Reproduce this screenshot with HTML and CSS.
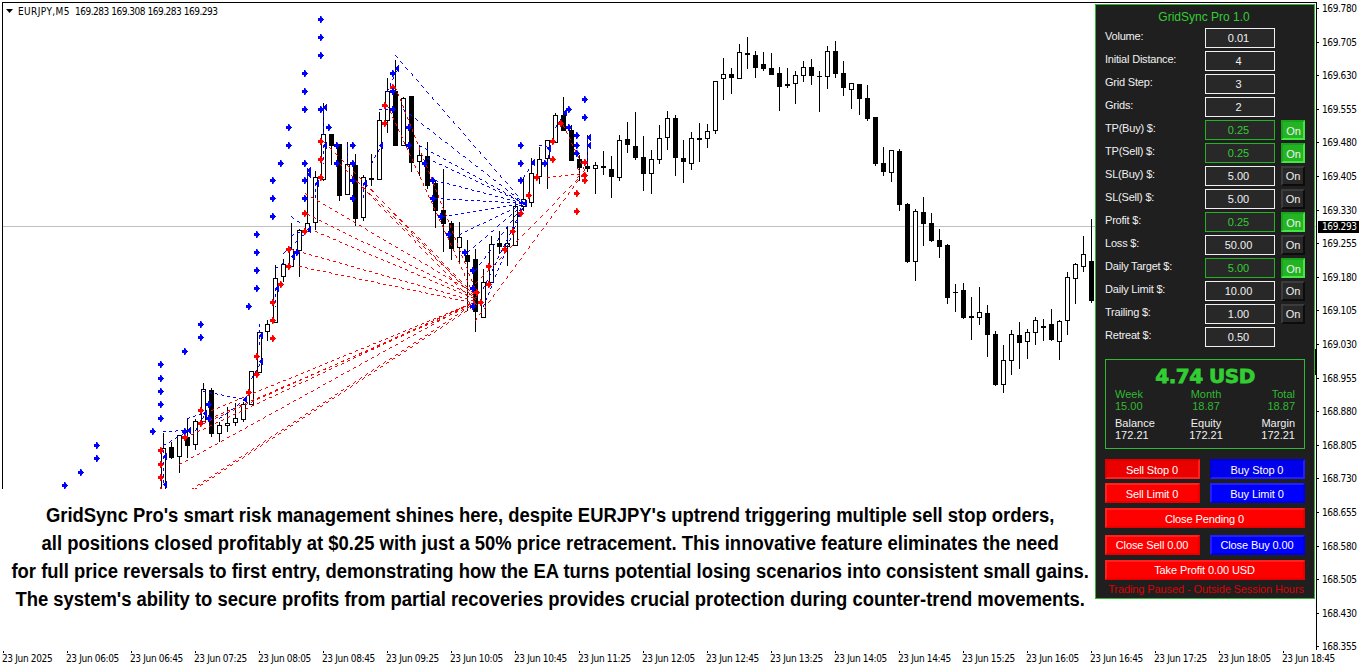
FILE: index.html
```html
<!DOCTYPE html>
<html lang="en">
<head>
    <meta charset="UTF-8">
    <meta name="viewport" content="width=device-width, initial-scale=1.0">
    <title>GridSync Pro - EURJPY,M5</title>
    <link rel="stylesheet" href="styles.css">
</head>
<body>

    <div class="terminal">
        <main class="chart">
            <div class="symbol">
                <svg class="caret" width="7" height="4" viewBox="0 0 7 4"><path d="M0 0h7L3.5 4z"/></svg>
                <span class="symbol-name">EURJPY,M5</span>
                <span class="symbol-prices">169.283 169.308 169.283 169.293</span>
            </div>

            <svg id="plot" class="plot" width="1316" height="489" viewBox="0 0 1316 489"></svg>

            <div class="caption">
                <p>GridSync Pro's smart risk management shines here, despite EURJPY's uptrend triggering multiple sell stop orders,</p>
                <p>all positions closed profitably at $0.25 with just a 50% price retracement. This innovative feature eliminates the need</p>
                <p>for full price reversals to first entry, demonstrating how the EA turns potential losing scenarios into consistent small gains.</p>
                <p>The system's ability to secure profits from partial recoveries provides crucial protection during counter-trend movements.</p>
            </div>
        </main>

        <aside class="price-axis">
            <span>169.780</span>
            <span>169.705</span>
            <span>169.630</span>
            <span>169.555</span>
            <span>169.480</span>
            <span>169.405</span>
            <span>169.330</span>
            <span>169.255</span>
            <span>169.180</span>
            <span>169.105</span>
            <span>169.030</span>
            <span>168.955</span>
            <span>168.880</span>
            <span>168.805</span>
            <span>168.730</span>
            <span>168.655</span>
            <span>168.580</span>
            <span>168.505</span>
            <span>168.430</span>
            <span>168.355</span>
            <div class="price-tag">169.293</div>
        </aside>

        <footer class="time-axis">
            <span>23 Jun 2025</span>
            <span>23 Jun 06:05</span>
            <span>23 Jun 06:45</span>
            <span>23 Jun 07:25</span>
            <span>23 Jun 08:05</span>
            <span>23 Jun 08:45</span>
            <span>23 Jun 09:25</span>
            <span>23 Jun 10:05</span>
            <span>23 Jun 10:45</span>
            <span>23 Jun 11:25</span>
            <span>23 Jun 12:05</span>
            <span>23 Jun 12:45</span>
            <span>23 Jun 13:25</span>
            <span>23 Jun 14:05</span>
            <span>23 Jun 14:45</span>
            <span>23 Jun 15:25</span>
            <span>23 Jun 16:05</span>
            <span>23 Jun 16:45</span>
            <span>23 Jun 17:25</span>
            <span>23 Jun 18:05</span>
            <span>23 Jun 18:45</span>
        </footer>

        <!-- Expert advisor panel -->
        <section class="panel">
            <h1>GridSync Pro 1.0</h1>

            <div class="settings">
                <div class="row"><label>Volume:</label><output>0.01</output></div>
                <div class="row"><label>Initial Distance:</label><output>4</output></div>
                <div class="row"><label>Grid Step:</label><output>3</output></div>
                <div class="row"><label>Grids:</label><output>2</output></div>
                <div class="row active"><label>TP(Buy) $:</label><output>0.25</output><button>On</button></div>
                <div class="row active"><label>TP(Sell) $:</label><output>0.25</output><button>On</button></div>
                <div class="row"><label>SL(Buy) $:</label><output>5.00</output><button>On</button></div>
                <div class="row"><label>SL(Sell) $:</label><output>5.00</output><button>On</button></div>
                <div class="row active"><label>Profit $:</label><output>0.25</output><button>On</button></div>
                <div class="row"><label>Loss $:</label><output>50.00</output><button>On</button></div>
                <div class="row active"><label>Daily Target $:</label><output>5.00</output><button>On</button></div>
                <div class="row"><label>Daily Limit $:</label><output>10.00</output><button>On</button></div>
                <div class="row"><label>Trailing $:</label><output>1.00</output><button>On</button></div>
                <div class="row"><label>Retreat $:</label><output>0.50</output></div>
            </div>

            <div class="stats">
                <h2>4.74 USD</h2>
                <div class="stats-row profit">
                    <div>Week<br>15.00</div>
                    <div>Month<br>18.87</div>
                    <div>Total<br>18.87</div>
                </div>
                <div class="stats-row">
                    <div>Balance<br>172.21</div>
                    <div>Equity<br>172.21</div>
                    <div>Margin<br>172.21</div>
                </div>
            </div>

            <div class="actions">
                <button class="sell pressed">Sell Stop 0</button>
                <button class="buy pressed">Buy Stop 0</button>
                <button class="sell">Sell Limit 0</button>
                <button class="buy">Buy Limit 0</button>
                <button class="sell wide">Close Pending 0</button>
                <button class="sell close">Close Sell 0.00</button>
                <button class="buy close">Close Buy 0.00</button>
                <button class="sell wide last">Take Profit 0.00 USD</button>
            </div>

            <p class="status">Trading Paused - Outside Session Hours</p>
        </section>
    </div>

    <script src="chart.js"></script>
</body>
</html>
```
FILE: styles.css
```css
* {
    box-sizing: border-box;
}

body {
    margin: 0;
    background-color: #fff;
    color: #000;
    font-family: "Liberation Sans", Arial, sans-serif;
    overflow: hidden;
}

.terminal {
    position: relative;
    display: grid;
    grid-template-columns: 1316px 46px;
    grid-template-rows: 650px 20px;
    width: 1362px;
    height: 670px;
}

/* Chart */
.chart {
    position: relative;
    display: flex;
    flex-direction: column;
}

.plot {
    display: block;
    flex: none;
}

.symbol {
    position: absolute;
    top: 4px;
    left: 6px;
    display: flex;
    align-items: center;
    height: 14px;
}

.symbol,
.price-axis,
.time-axis {
    font-family: "DejaVu Sans Condensed", "DejaVu Sans", sans-serif;
    font-stretch: condensed;
    font-size: 10px;
    letter-spacing: -0.35px;
    white-space: nowrap;
}

.symbol-name {
    width: 57px;
    margin-left: 5px;
    letter-spacing: 0.4px;
}

.symbol-prices {
    letter-spacing: -0.5px;
    word-spacing: 0.2px;
}

/* Condensed bold text, 1100px wide after scaling */
.caption {
    width: 1194px;
    padding-top: 12px;
    text-align: center;
    font-size: 20px;
    font-weight: bold;
    line-height: 28px;
    white-space: nowrap;
    transform: scaleX(0.9215);
    transform-origin: left top;
}

.caption p {
    margin: 0;
}

/* Axes */
.price-axis {
    position: relative;
    height: 648px;
    margin-top: 2px;
    border-left: 1px solid #000;
    display: flex;
    flex-direction: column;
}

.price-axis span {
    flex: none;
    display: flex;
    align-items: center;
    gap: 3px;
    height: 33.6px;
    margin-top: -10.3px;
    margin-bottom: 10.3px;
}

.price-axis span::before {
    content: "";
    width: 2px;
    height: 1px;
    background-color: #000;
}

.price-tag {
    position: absolute;
    top: 219px;
    left: 1px;
    width: 41px;
    height: 12px;
    padding-left: 4px;
    background-color: #000;
    color: #fff;
    line-height: 12px;
}

.time-axis {
    grid-column: 1 / 3;
    display: flex;
    padding-left: 2px;
}

.time-axis span {
    position: relative;
    flex: none;
    width: 64px;
    padding-top: 3px;
    line-height: 12px;
}

.time-axis span::before {
    content: "";
    position: absolute;
    top: 1px;
    left: 1px;
    width: 1px;
    height: 2px;
    background-color: #000;
}

/* Panel lies over the chart */
.panel {
    position: absolute;
    top: 4px;
    left: 1095px;
    width: 220px;
    height: 595px;
    padding: 0 9px;
    border: 1px solid #32b932;
    background-color: #1f1f1f;
    color: #f0f0f0;
    font-size: 11px;
}

.panel h1 {
    height: 23px;
    margin: 0;
    padding-right: 2px;
    color: #32cd32;
    font-size: 12px;
    font-weight: normal;
    line-height: 24px;
    text-align: center;
}

.row {
    display: grid;
    grid-template-columns: 100px 70px 24px;
    height: 23px;
}

.row label {
    line-height: 17px;
    letter-spacing: -0.2px;
}

.row output {
    height: 20px;
    padding-right: 3px;
    border: 1px solid #f0f0f0;
    background-color: #282828;
    line-height: 19px;
    text-align: center;
}

.row.active output {
    border-color: #22b422;
    color: #32cd32;
}

button {
    padding: 0;
    border: 2px solid;
    color: #fff;
    font-family: inherit;
    font-size: 11px;
    line-height: 17px;
}

.row button {
    width: 24px;
    height: 20px;
    margin-left: 6px;
    border-color: #3c3c3c #0c0c0c #0c0c0c #3c3c3c;
    background-color: #282828;
    color: #f0f0f0;
}

.row.active button {
    padding-top: 1px;
    padding-left: 1px;
    border-color: #1ba41b #46e646 #46e646 #1ba41b;
    background-color: #22b422;
}

.stats {
    height: 90px;
    margin-top: 9px;
    padding: 6px 9px 0;
    border: 1px solid #32b932;
}

.stats h2 {
    margin: 0;
    color: #32cd32;
    font-family: "DejaVu Sans", sans-serif;
    font-size: 20px;
    font-weight: bold;
    line-height: 20px;
    letter-spacing: -0.5px;
    text-align: center;
    -webkit-text-stroke: 0.8px #32cd32;
}

.stats-row {
    display: grid;
    grid-template-columns: 1fr 1fr 1fr;
    height: 29px;
    line-height: 12px;
}

.stats-row div:nth-child(2) {
    padding-left: 2px;
    text-align: center;
}

.stats-row div:nth-child(3) {
    text-align: right;
}

.profit {
    height: 31px;
    padding-top: 2px;
    color: #32b932;
}

.actions {
    display: grid;
    grid-template-columns: 95px 95px;
    column-gap: 10px;
    margin-top: 10px;
}

.actions button {
    height: 20px;
    margin-bottom: 4px;
    padding-top: 1px;
    padding-right: 1px;
    letter-spacing: -0.1px;
}

.actions .wide {
    grid-column: 1 / 3;
    margin-top: 1px;
    margin-bottom: 7px;
}

.actions .close {
    margin-bottom: 5px;
    padding-top: 0;
}

.actions .last {
    margin: 0;
    padding-top: 0;
}

.sell {
    border-color: #ff2020 #e60000 #e60000 #ff2020;
    background-color: #ff0000;
}

.buy {
    border-color: #2020ff #0000e6 #0000e6 #2020ff;
    background-color: #0000ff;
}

.sell.pressed {
    border-color: #dc0000 #ff2020 #ff2020 #dc0000;
    background-color: #eb0000;
}

.buy.pressed {
    border-color: #0000dc #2020ff #2020ff #0000dc;
    background-color: #0000eb;
}

.status {
    margin: 3px 0 0;
    padding-left: 2px;
    color: #dc0000;
    line-height: 13px;
    letter-spacing: -0.1px;
    text-align: center;
    white-space: nowrap;
}
```
FILE: chart.js
```js
// Candles are 8px apart: [high, low, body top, body bottom, bearish]
const FIRST_X = 163;
const STEP = 8;
const candles = [
    [433, 489, 448, 489, 0], [442, 458, 447, 457, 1], [435, 472, 435, 456, 0], [418, 457, 437, 445, 1],
    [419, 449, 421, 444, 0], [383, 421, 389, 421, 0], [388, 436, 390, 433, 1], [422, 441, 425, 433, 0],
    [407, 431, 423, 425, 0], [403, 425, 418, 422, 0], [402, 421, 404, 419, 0], [371, 404, 371, 404, 0],
    [332, 372, 332, 372, 0], [320, 340, 324, 331, 0], [265, 322, 278, 322, 0], [259, 281, 264, 276, 0],
    [223, 266, 249, 266, 0], [229, 276, 230, 250, 0], [168, 231, 223, 231, 0], [171, 229, 177, 222, 0],
    [103, 180, 134, 179, 0], [134, 164, 134, 145, 1], [144, 200, 144, 195, 1], [142, 194, 164, 194, 0],
    [154, 225, 165, 218, 1], [175, 220, 177, 217, 0], [154, 185, 178, 179, 1], [112, 179, 120, 179, 0],
    [78, 132, 91, 120, 0], [60, 145, 91, 145, 1], [97, 145, 98, 145, 0], [96, 171, 96, 162, 1],
    [145, 175, 155, 161, 0], [142, 188, 156, 185, 1], [180, 227, 183, 210, 1], [169, 251, 210, 223, 1],
    [221, 259, 223, 248, 1], [222, 263, 237, 247, 0], [240, 310, 255, 261, 1], [249, 331, 259, 311, 1],
    [269, 317, 282, 317, 0], [236, 282, 244, 282, 0], [231, 253, 243, 246, 1], [226, 265, 243, 246, 0],
    [202, 245, 206, 245, 0], [177, 210, 199, 206, 0], [158, 206, 173, 202, 0], [147, 183, 159, 176, 0],
    [140, 188, 140, 158, 0], [113, 142, 115, 142, 0], [97, 130, 115, 130, 1], [125, 160, 130, 160, 1],
    [155, 180, 159, 167, 1], [135, 171, 166, 168, 1], [162, 193, 165, 168, 0], [151, 174, 166, 167, 1],
    [156, 197, 169, 176, 1], [135, 180, 140, 177, 0], [122, 152, 139, 144, 1], [112, 159, 146, 157, 1],
    [136, 190, 157, 173, 1], [150, 193, 159, 173, 0], [125, 163, 138, 159, 0], [111, 149, 118, 137, 0],
    [115, 175, 118, 157, 1], [140, 182, 158, 161, 1], [132, 169, 138, 163, 0], [123, 161, 138, 139, 1],
    [124, 147, 131, 138, 0], [81, 133, 81, 130, 0], [58, 99, 74, 78, 0], [68, 93, 74, 77, 1],
    [44, 78, 52, 78, 0], [37, 68, 53, 54, 1], [51, 77, 55, 67, 1], [52, 70, 64, 68, 1],
    [53, 74, 68, 74, 1], [67, 110, 73, 86, 1], [68, 87, 84, 85, 1], [71, 103, 75, 83, 0],
    [61, 81, 67, 75, 0], [59, 84, 67, 75, 1], [71, 111, 76, 76, 1], [46, 88, 51, 76, 0],
    [41, 77, 51, 73, 1], [61, 95, 73, 87, 1], [83, 108, 83, 89, 0], [84, 114, 84, 98, 1],
    [85, 120, 98, 118, 1], [117, 165, 117, 163, 1], [147, 175, 163, 171, 1], [150, 181, 150, 172, 0],
    [149, 210, 151, 204, 1], [203, 262, 204, 261, 1], [209, 280, 211, 261, 0], [197, 245, 212, 223, 1],
    [213, 241, 223, 240, 1], [229, 257, 240, 246, 1], [244, 303, 245, 297, 1], [284, 311, 292, 292, 1],
    [283, 318, 290, 317, 1], [297, 339, 316, 317, 1], [287, 324, 312, 317, 0], [305, 356, 313, 334, 1],
    [331, 385, 334, 384, 1], [345, 392, 360, 384, 0], [330, 374, 334, 360, 0], [322, 368, 335, 342, 1],
    [329, 358, 332, 341, 0], [317, 344, 320, 332, 0], [319, 340, 326, 327, 1], [309, 340, 324, 339, 1],
    [320, 359, 321, 341, 0], [272, 334, 277, 320, 0], [263, 303, 264, 278, 0], [236, 271, 254, 266, 0],
    [219, 302, 261, 300, 1]
];

// Order marks: [x, y, y, ...]
const buyMarks = [
    [65, 485], [81, 472], [97, 445, 458], [153, 431], [161, 364, 378, 391, 404, 418],
    [185, 351, 431], [201, 324, 337], [209, 404, 418], [249, 306], [257, 234, 252, 270, 288],
    [273, 180, 198, 216], [281, 163], [289, 127, 145], [297, 252],
    [305, 73, 91, 109, 163, 180, 198], [321, 19, 37, 55, 109], [329, 127], [337, 145, 163],
    [353, 145, 163, 180, 198], [393, 73, 91, 109], [409, 127, 145], [425, 163], [433, 180, 198],
    [441, 216], [449, 234], [465, 252], [473, 270, 288, 306], [521, 145, 163, 180], [545, 163],
    [569, 109, 127], [577, 135, 145, 153], [585, 99, 117]
];
const sellMarks = [
    [161, 450, 464, 477, 490], [185, 437], [201, 410, 423], [249, 392], [257, 356, 374],
    [273, 302, 320, 338], [281, 284], [289, 249, 266], [305, 213, 231], [321, 141, 159, 177],
    [385, 105, 123], [393, 87], [477, 292], [481, 302], [489, 266, 284], [505, 249], [513, 231],
    [521, 213], [529, 195], [537, 177], [553, 141, 159], [561, 123], [577, 193, 211],
    [585, 162, 175, 180]
];
const closeMarks = [
    [165, 456, 484], [189, 430], [205, 413], [245, 399], [261, 335, 361], [277, 288], [293, 256],
    [309, 170, 174, 229], [317, 183], [325, 107, 145], [365, 183], [381, 145], [397, 68],
    [525, 203], [533, 162], [549, 148], [565, 112], [589, 137, 145]
];

// Dashed trade lines: [x1, y1, x2, y2]
const sellLines = [
    [179, 464, 474, 301], [191, 489, 474, 303], [194, 489, 476, 304], [185, 437, 474, 301],
    [203, 423, 474, 302], [203, 421, 474, 304], [211, 410, 474, 302],
    [305, 193, 476, 294], [307, 214, 476, 297], [315, 231, 476, 299], [291, 249, 476, 301],
    [299, 266, 476, 303], [323, 141, 476, 296], [339, 163, 476, 298], [355, 180, 474, 302], [365, 183, 476, 300],
    [387, 105, 474, 296], [395, 87, 476, 292],
    [475, 283, 583, 173], [475, 320, 583, 173], [547, 177, 583, 173], [563, 125, 585, 172],
    [577, 168, 584, 175], [577, 177, 584, 170]
];
const buyLines = [
    [395, 55, 524, 203], [403, 109, 524, 203], [419, 145, 524, 203], [427, 158, 524, 203],
    [435, 180, 524, 203], [435, 198, 524, 203], [443, 216, 524, 203], [459, 234, 524, 203],
    [467, 252, 524, 203], [475, 270, 524, 203], [483, 288, 524, 203], [483, 306, 524, 203],
    [163, 431, 187, 430], [163, 450, 163, 484], [163, 445, 187, 431], [187, 418, 205, 412],
    [203, 391, 245, 399], [219, 418, 245, 399], [195, 430, 205, 413], [251, 378, 261, 361],
    [259, 324, 259, 345], [275, 268, 283, 262], [275, 288, 275, 306], [283, 253, 309, 229],
    [291, 216, 300, 223], [291, 235, 309, 228], [307, 168, 307, 178], [315, 183, 315, 200],
    [323, 108, 323, 134], [323, 145, 323, 163], [347, 144, 347, 163], [363, 183, 363, 200],
    [371, 163, 381, 145], [379, 109, 393, 109], [387, 91, 397, 68], [523, 177, 533, 162],
    [539, 145, 549, 147], [547, 163, 549, 148], [555, 127, 565, 112], [587, 137, 587, 165]
];

function rect(x, y, w, h, color) {
    return `<rect x="${x}" y="${y}" width="${w}" height="${h}" fill="${color}"/>`;
}

// One pixel per step on the longer axis, 3 on and 3 off
function drawLines(lines, color) {
    let d = '';
    lines.forEach(([x1, y1, x2, y2]) => {
        const steps = Math.max(Math.abs(x2 - x1), Math.abs(y2 - y1));
        for (let i = 0; i <= steps; i++) {
            if (i % 6 < 3) {
                const x = Math.round(x1 + (x2 - x1) * i / steps);
                const y = Math.round(y1 + (y2 - y1) * i / steps);
                d += `M${x} ${y}h1v1h-1z`;
            }
        }
    });
    return `<path d="${d}" fill="${color}"/>`;
}

function drawMarks(marks, shape, color) {
    return marks.map(([x, ...ys]) => ys.map(y =>
        `<path transform="translate(${x} ${y})" d="${shape}" fill="${color}"/>`
    ).join('')).join('');
}

// Stepped arrow heads, drawn on whole pixels
const ARROW = 'M-1 -3H0.5V-2H1V-1H2V0H3V1H2V2H1V3H0.5V4H-1V2H-3V-1H-1Z';
const TRIANGLE = 'M1 -3H2V4H1V3H0V2H-1V1H-2V0H-1V-1H0V-2H1Z';

function drawChart() {
    let out = rect(2, 2, 1314, 1, '#000') + rect(2, 2, 1, 487, '#000');
    out += rect(3, 226, 1313, 1, '#c0c0c0');

    candles.forEach(([high, low, top, bottom, bearish], i) => {
        const x = FIRST_X + i * STEP;
        out += rect(x, high, 1, low - high + 1, '#000');
        out += rect(x - 2, top, 5, bottom - top + 1, '#000');
        if (!bearish) {
            out += rect(x - 1, top + 1, 3, Math.max(bottom - top - 1, 0), '#fff');
        }
    });

    out += drawLines(sellLines, '#f00') + drawLines(buyLines, '#00f');
    out += drawMarks(closeMarks, TRIANGLE, '#00f');
    out += drawMarks(sellMarks, ARROW, '#f00');
    out += drawMarks(buyMarks, ARROW, '#00f');
    out += rect(1315, 349, 1, 26, '#000');
    document.getElementById('plot').innerHTML = out;
}

drawChart();
```
